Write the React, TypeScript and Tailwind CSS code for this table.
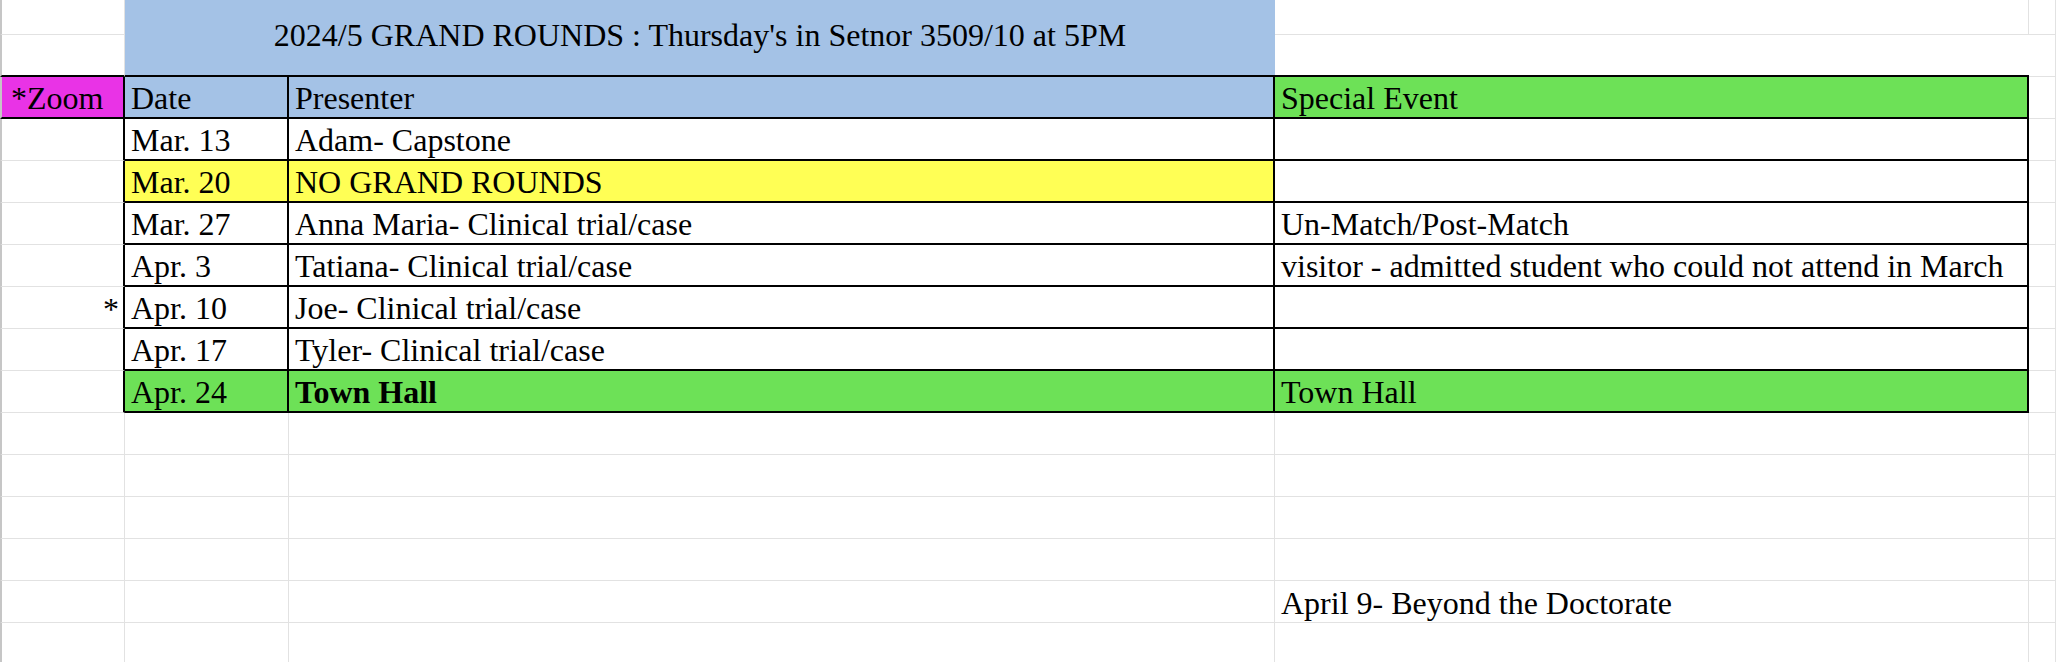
import React from "react";

type Row = {
  mark?: string;
  date: string;
  presenter: string;
  event?: string;
  tone?: "yellow" | "green";
  bold?: boolean;
};

const rows: Row[] = [
  { date: "Mar. 13", presenter: "Adam- Capstone" },
  { date: "Mar. 20", presenter: "NO GRAND ROUNDS", tone: "yellow" },
  { date: "Mar. 27", presenter: "Anna Maria- Clinical trial/case", event: "Un-Match/Post-Match" },
  { date: "Apr. 3", presenter: "Tatiana- Clinical trial/case", event: "visitor - admitted student who could not attend in March" },
  { mark: "*", date: "Apr. 10", presenter: "Joe- Clinical trial/case" },
  { date: "Apr. 17", presenter: "Tyler- Clinical trial/case" },
  { date: "Apr. 24", presenter: "Town Hall", event: "Town Hall", tone: "green", bold: true },
];

const grid = "border-r border-b border-[#e2e2e2]";
const text = "flex items-end px-[6px] pb-[3px] whitespace-nowrap overflow-hidden leading-none";

const App = () => {
  const fill = (tone?: string) =>
    tone === "yellow" ? "bg-[#ffff55]" : tone === "green" ? "bg-[#6de157]" : "bg-white";

  return (
    <div
      className="w-[2056px] h-[662px] overflow-hidden bg-white text-black text-[32px]"
      style={{ fontFamily: '"Liberation Serif", "Times New Roman", serif' }}
    >
      <div className="grid grid-cols-[125px_164px_986px_754px_1fr] grid-rows-[35px_repeat(16,42px)]">
        {/* title rows */}
        <div className={`${grid} border-l-2 border-l-[#c6c6c6]`} />
        <div className="col-span-2 row-span-2 bg-[#a4c2e6] border-b-2 border-black flex items-center justify-center pb-[6px] leading-none whitespace-nowrap">
          2024/5 GRAND ROUNDS : Thursday's in Setnor 3509/10 at 5PM
        </div>
        <div className={grid} />
        <div className={grid} />
        <div className="border-r border-[#e2e2e2] border-b-2 border-b-black border-l-2 border-l-[#c6c6c6]" />
        <div className="border-b-2 border-black" />
        <div className={grid} />

        {/* header row */}
        <div className={`${text} bg-[#e933e6] border-b-2 border-r-2 border-black border-l-2 border-l-[#c6c6c6] pl-[9px]`}>
          *Zoom
        </div>
        <div className={`${text} bg-[#a4c2e6] border-b-2 border-r-2 border-black`}>Date</div>
        <div className={`${text} bg-[#a4c2e6] border-b-2 border-r-2 border-black`}>Presenter</div>
        <div className={`${text} bg-[#6de157] border-b-2 border-r-2 border-black`}>Special Event</div>
        <div className={grid} />

        {rows.map((r) => (
          <React.Fragment key={r.date}>
            <div className={`${text} justify-end pr-[4px] border-b border-[#e2e2e2] border-r-2 border-r-black border-l-2 border-l-[#c6c6c6]`}>
              {r.mark}
            </div>
            <div className={`${text} ${fill(r.tone)} border-b-2 border-r-2 border-black`}>{r.date}</div>
            <div className={`${text} ${fill(r.tone)} border-b-2 border-r-2 border-black ${r.bold ? "font-bold" : ""}`}>
              {r.presenter}
            </div>
            <div className={`${text} ${r.tone === "green" ? "bg-[#6de157]" : "bg-white"} border-b-2 border-r-2 border-black`}>
              {r.event}
            </div>
            <div className={grid} />
          </React.Fragment>
        ))}

        {/* empty rows below the table */}
        {Array.from({ length: 7 }).map((_, i) => (
          <React.Fragment key={i}>
            <div className={`${grid} border-l-2 border-l-[#c6c6c6]`} />
            <div className={grid} />
            <div className={grid} />
            <div className={`${text} ${grid}`}>{i === 4 ? "April 9- Beyond the Doctorate" : ""}</div>
            <div className={grid} />
          </React.Fragment>
        ))}
      </div>
    </div>
  );
};

export default App;
